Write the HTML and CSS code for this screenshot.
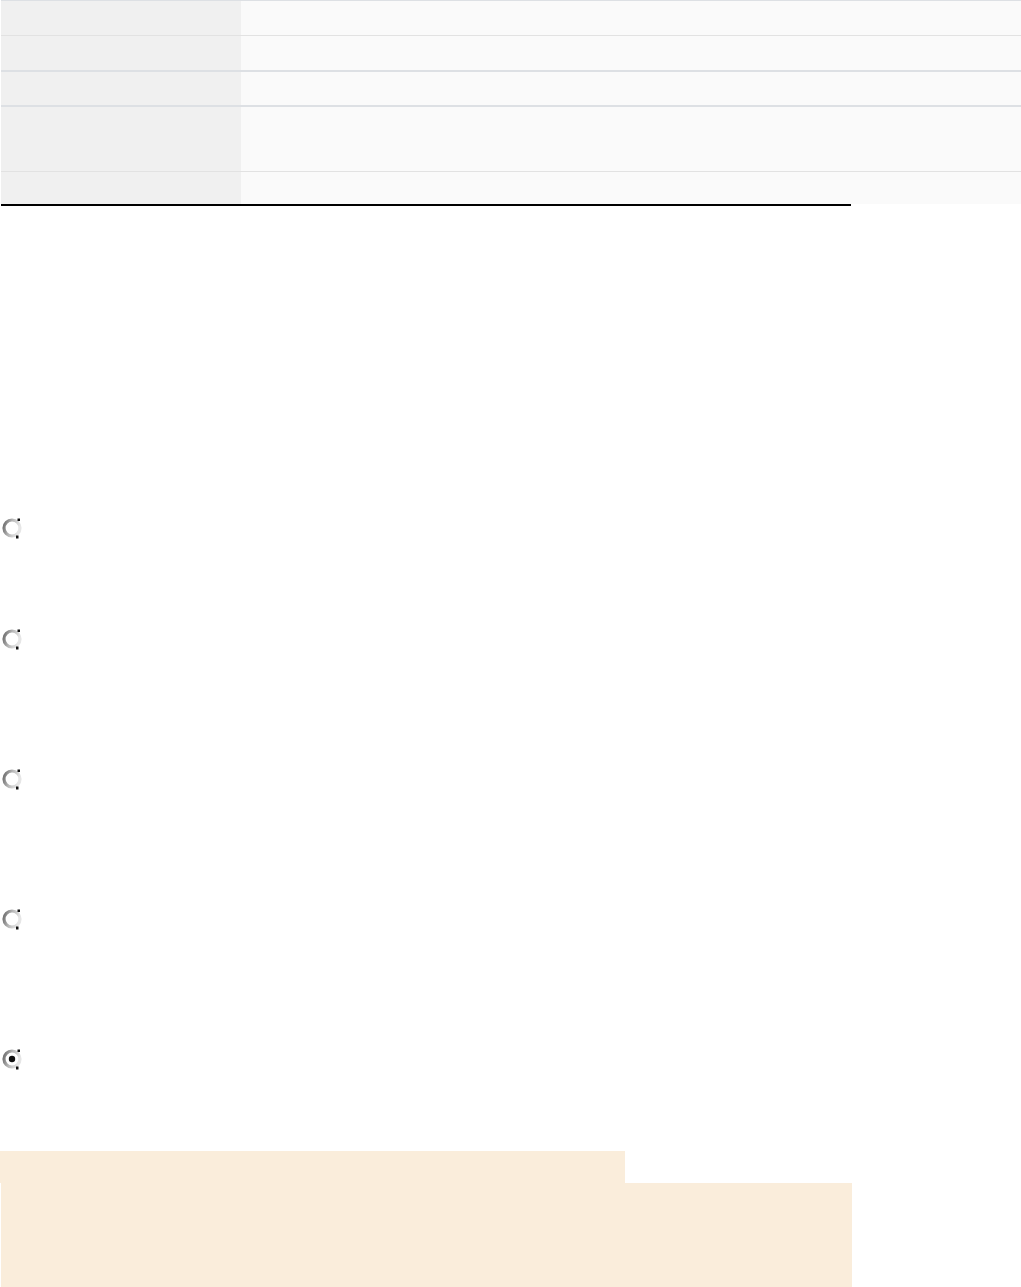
FILE: index.html
```html
<!DOCTYPE html>
<html>
<head>
<meta charset="utf-8">
<link rel="stylesheet" href="styles.css">
</head>
<body>
<div class="table">
  <div class="row r1"><div class="th"></div><div class="td"></div></div>
  <div class="row r2"><div class="th"></div><div class="td"></div></div>
  <div class="row r3"><div class="th"></div><div class="td"></div></div>
  <div class="row r4"><div class="th"></div><div class="td"></div></div>
  <div class="row r5"><div class="th"></div><div class="td"></div></div>
</div>
<div class="rule"></div>

<div class="radios">
  <div class="radio first"><svg width="22" height="22" viewBox="0 0 22 22"><defs><linearGradient id="g1" x1="0" y1="0" x2="1" y2="0.3"><stop offset="0" stop-color="#6a6a6a"/><stop offset="0.5" stop-color="#b8b8b8"/><stop offset="1" stop-color="#e6e6e6"/></linearGradient></defs><circle cx="11" cy="11" r="8" fill="#fff" stroke="url(#g1)" stroke-width="3.2"/><rect x="16.5" y="1.5" width="2.5" height="2.5" fill="#111"/><rect x="15" y="18.5" width="2.5" height="3" fill="#111"/></svg></div>
  <div class="radio gap-a"><svg width="22" height="22" viewBox="0 0 22 22"><circle cx="11" cy="11" r="8" fill="#fff" stroke="url(#g1)" stroke-width="3.2"/><rect x="16.5" y="1.5" width="2.5" height="2.5" fill="#111"/><rect x="15" y="18.5" width="2.5" height="3" fill="#111"/></svg></div>
  <div class="radio gap-b"><svg width="22" height="22" viewBox="0 0 22 22"><circle cx="11" cy="11" r="8" fill="#fff" stroke="url(#g1)" stroke-width="3.2"/><rect x="16.5" y="1.5" width="2.5" height="2.5" fill="#111"/><rect x="15" y="18.5" width="2.5" height="3" fill="#111"/></svg></div>
  <div class="radio gap-b"><svg width="22" height="22" viewBox="0 0 22 22"><circle cx="11" cy="11" r="8" fill="#fff" stroke="url(#g1)" stroke-width="3.2"/><rect x="16.5" y="1.5" width="2.5" height="2.5" fill="#111"/><rect x="15" y="18.5" width="2.5" height="3" fill="#111"/></svg></div>
  <div class="radio gap-b"><svg width="22" height="22" viewBox="0 0 22 22"><circle cx="11" cy="11" r="8" fill="#fff" stroke="url(#g1)" stroke-width="3.2"/><circle cx="11" cy="11" r="3.2" fill="#111"/><rect x="16.5" y="1.5" width="2.5" height="2.5" fill="#111"/><rect x="15" y="18.5" width="2.5" height="3" fill="#111"/></svg></div>
</div>

<div class="note-head"></div>
<div class="note-body"></div>
</body>
</html>
```

FILE: styles.css
```css
html, body {
  margin: 0;
  padding: 0;
  background: #ffffff;
  font-family: "Liberation Sans", Arial, sans-serif;
}

.table {
  margin-left: 1px;
  width: 1020px;
  border-top: 1px solid #dde0e4;
}

.row {
  display: grid;
  grid-template-columns: 240px 1fr;
}

.th { background: #f0f0f0; }
.td { background: #fafafa; }

.r1 { height: 34px; border-bottom: 1px solid #e2e2e2; }
.r2 { height: 34px; border-bottom: 2px solid #dde0e4; }
.r3 { height: 33px; border-bottom: 2px solid #dde0e4; }
.r4 { height: 64px; border-bottom: 1px solid #e2e2e2; }
.r5 { height: 32px; }

.rule {
  margin-left: 1px;
  width: 850px;
  height: 2px;
  background: #000;
}

.radios {
  display: flex;
  flex-direction: column;
  align-items: flex-start;
  padding-left: 1px;
  margin-top: 311px;
}

.radio {
  width: 22px;
  height: 22px;
}

.radio svg { display: block; }

.gap-a { margin-top: 89px; }
.gap-b { margin-top: 118px; }

.note-head {
  margin-top: 81px;
  width: 625px;
  height: 32px;
  background: #faeddb;
}

.note-body {
  margin-left: 1px;
  width: 851px;
  height: 110px;
  background: #faeddb;
}
```
